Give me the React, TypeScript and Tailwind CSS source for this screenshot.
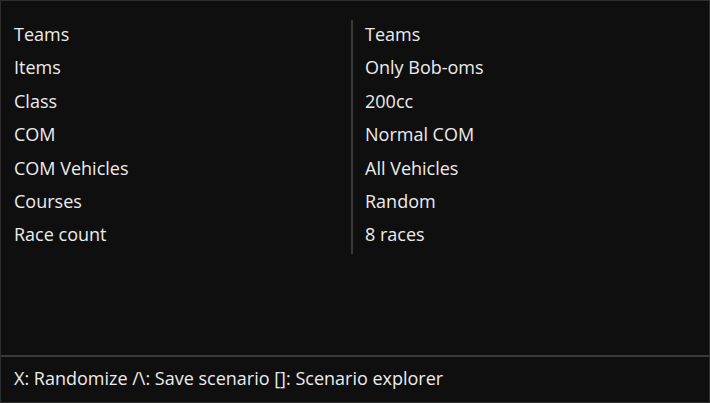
const rows: [string, string][] = [
  ["Teams", "Teams"],
  ["Items", "Only Bob-oms"],
  ["Class", "200cc"],
  ["COM", "Normal COM"],
  ["COM Vehicles", "All Vehicles"],
  ["Courses", "Random"],
  ["Race count", "8 races"],
];

export default function App() {
  return (
    <div
      className="w-[710px] h-[403px] bg-[#0f0f0f] border border-[#2e2e2e] flex flex-col text-[#ececec] text-[18px]"
      style={{ fontFamily: '"Open Sans", "Noto Sans", sans-serif' }}
    >
      <div className="flex-1 pt-[19px]">
        <div className="flex">
          <div className="w-[350px] pl-[13px]">
            {rows.map(([label]) => (
              <div key={label} className="h-[33.4px] leading-[33.4px] -translate-y-[2px]">
                {label}
              </div>
            ))}
          </div>
          <div className="border-l-2 border-[#3a3a3a] pl-[12px]">
            {rows.map(([label, value]) => (
              <div key={label} className="h-[33.4px] leading-[33.4px] -translate-y-[2px]">
                {value}
              </div>
            ))}
          </div>
        </div>
      </div>
      <div className="h-[47px] border-t-2 border-[#3a3a3a] pl-[13px] pb-[3px] flex items-center">
        X: Randomize /\: Save scenario []: Scenario explorer
      </div>
    </div>
  );
}
